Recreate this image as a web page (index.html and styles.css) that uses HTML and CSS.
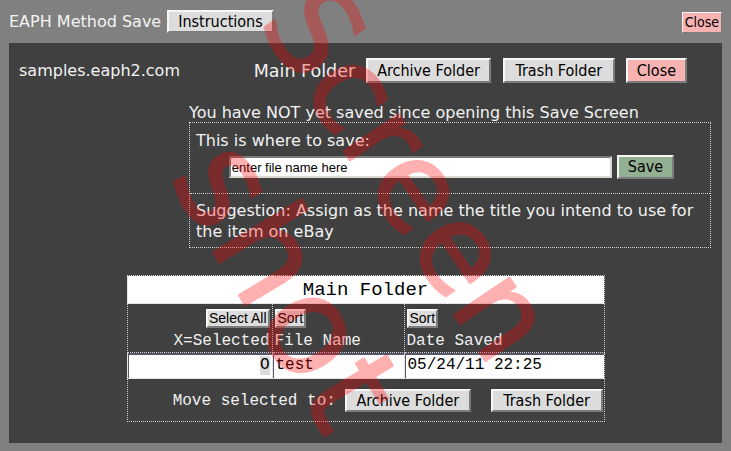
FILE: index.html
```html
<!DOCTYPE html>
<html>
<head>
<meta charset="utf-8">
<title>EAPH Method Save</title>
<link rel="stylesheet" href="styles.css">
</head>
<body>
<div class="topbar">
  <span class="app-title">EAPH Method Save</span>
  <button class="btn btn-instr">Instructions</button>
  <button class="btn btn-pink btn-close-top">Close</button>
</div>
<div class="panel">
  <div class="head-row">
    <span class="site">samples.eaph2.com</span>
    <span class="folder-title">Main Folder</span>
    <button class="btn btn-lg btn-archive">Archive Folder</button>
    <button class="btn btn-lg btn-trash">Trash Folder</button>
    <button class="btn btn-lg btn-pink btn-close">Close</button>
  </div>
  <div class="save-area">
    <div class="status">You have NOT yet saved since opening this Save Screen</div>
    <div class="save-box">
      <div class="save-section">
        <div class="save-label">This is where to save:</div>
        <div class="save-line">
          <input class="name-input" type="text" value="enter file name here">
          <button class="btn btn-save">Save</button>
        </div>
      </div>
      <div class="suggest">Suggestion: Assign as the name the title you intend to use for the item on eBay</div>
    </div>
  </div>
  <table class="files">
    <colgroup><col class="col-sel"><col class="col-name"><col class="col-date"></colgroup>
    <tr><th colspan="3" class="files-title">Main Folder</th></tr>
    <tr class="files-head">
      <td class="c-sel"><div class="hcell hcell-right"><button class="btn-sm">Select All</button><span>X=Selected</span></div></td>
      <td><div class="hcell"><button class="btn-sm">Sort</button><span>File Name</span></div></td>
      <td><div class="hcell"><button class="btn-sm">Sort</button><span>Date Saved</span></div></td>
    </tr>
    <tr class="files-row">
      <td class="c-sel"><span class="mark">O</span></td>
      <td>test</td>
      <td>05/24/11 22:25</td>
    </tr>
    <tr class="files-foot">
      <td colspan="3"><div class="foot-inner"><span>Move selected to:</span><button class="btn btn-foot-archive">Archive Folder</button><button class="btn btn-foot-trash">Trash Folder</button></div></td>
    </tr>
  </table>
</div>
<svg class="watermark" width="731" height="451" viewBox="0 0 731 451" aria-hidden="true">
  <g class="wm-text">
    <text x="374" y="196" transform="rotate(56 374 196)" text-anchor="middle">Screen</text>
    <text class="wm-line2" x="248" y="310" transform="rotate(59 248 310)" text-anchor="middle">shot</text>
  </g>
</svg>
</body>
</html>
```
FILE: styles.css
```css
* { box-sizing: border-box; }
html, body { margin: 0; padding: 0; }
body {
  width: 731px;
  height: 451px;
  overflow: hidden;
  position: relative;
  background: #808080;
  font-family: "DejaVu Sans", Verdana, sans-serif;
  font-size: 16px;
  color: #f2f2f2;
}

.btn {
  font-family: "DejaVu Sans Condensed", "DejaVu Sans", sans-serif;
  font-size: 16px;
  line-height: 19px;
  color: #000;
  background: #dcdcdc;
  border: 2px solid;
  border-color: #f6f6f6 #7c7c7c #7c7c7c #f6f6f6;
  padding: 0 10px;
  margin: 0;
}
.btn-pink { background: #f7b2b2; }

/* top bar */
.topbar {
  display: flex;
  align-items: baseline;
  height: 43px;
  padding: 10px 9px 0 9px;
}
.app-title { line-height: 19px; color: #f4f4f4; }
.btn-instr { margin-left: 6px; padding: 0 9px; }
.btn-close-top {
  margin-left: auto;
  font-size: 14px;
  line-height: 17px;
  padding: 1px 2px;
  border-width: 1px;
}

/* panel */
.panel {
  margin: 0 9px;
  height: 400px;
  background: #404040;
  padding-top: 15px;
}
.head-row {
  display: flex;
  align-items: center;
  height: 25px;
  padding: 0 35px 0 10px;
}
.site { margin-right: auto; }
.folder-title { font-size: 17.5px; margin-right: 11px; }
.btn-lg { padding: 1px 10.5px; }
.btn-archive { margin-right: 12px; padding: 1px 9px; }
.btn-trash { margin-right: 11px; }
.btn-close { padding: 1px 9px; }

.save-area { margin: 20px 11px 0 180px; }
.status { line-height: 19px; white-space: nowrap; }
.save-box { border: 1px dotted #d4d4d4; }
.save-section { padding: 8px 6px 14px; line-height: 19px; }
.save-line {
  display: flex;
  justify-content: center;
  align-items: center;
  gap: 5px;
  margin-top: 5px;
  padding-left: 3px;
}
.name-input {
  width: 383px;
  height: 22px;
  margin: 0;
  padding: 0 1px;
  border: 2px solid;
  border-color: #7a7a7a #dedad2 #dedad2 #7a7a7a;
  background: #fff;
  color: #000;
  font-family: "Liberation Sans", Arial, sans-serif;
  font-size: 13px;
}
.btn-save { background: #93b093; line-height: 20px; padding: 0 9px; }
.suggest {
  border-top: 1px dotted #d4d4d4;
  padding: 6px 0 5px 6px;
  line-height: 21px;
}

/* file table */
.files {
  margin: 27px auto 0;
  width: 477px;
  table-layout: fixed;
  border-collapse: collapse;
  border: 1px dotted #cfcfcf;
  font-family: "Liberation Mono", "Courier New", monospace;
  font-size: 16px;
  color: #f0f0f0;
}
.col-sel { width: 145px; }
.col-name { width: 132px; }
.col-date { width: 200px; }
.files td, .files th {
  border: 1px dotted #cfcfcf;
  padding: 0;
}
.files-title {
  background: #fff;
  color: #000;
  font-weight: normal;
  font-size: 19px;
  line-height: 22px;
  padding: 3px 0 2px !important;
  text-align: center;
}
.files-head td { vertical-align: top; padding: 5px 2px 2px 2px; }
.c-sel { text-align: right; }
.hcell {
  display: flex;
  flex-direction: column;
  align-items: flex-start;
  gap: 4px;
  line-height: 18px;
  white-space: nowrap;
}
.hcell-right { align-items: flex-end; }
.btn-sm {
  font-family: "Liberation Sans", Arial, sans-serif;
  font-size: 14px;
  line-height: 15px;
  color: #000;
  background: #dcdcdc;
  border: 2px solid;
  border-color: #f6f6f6 #7c7c7c #7c7c7c #f6f6f6;
  padding: 0 1px;
  margin: 0;
}
.files-row td {
  background: #fff;
  color: #000;
  line-height: 19px;
  padding: 3px 2px 3px 3px;
  box-shadow: inset 1px 2px 0 #56566a;
}
.mark { display: inline-block; background: #dcdcdc; }
.files-foot td { padding: 10px 1px 9px; }
.foot-inner {
  display: flex;
  justify-content: flex-end;
  align-items: center;
  white-space: nowrap;
}
.btn-foot-archive { margin-left: 9px; padding: 0 9.5px; }
.btn-foot-trash { margin-left: 20px; padding: 0 10.5px; }

/* watermark overlay */
.watermark {
  position: absolute;
  left: 0;
  top: 0;
  pointer-events: none;
}
.wm-text {
  font-family: "DejaVu Sans", sans-serif;
  font-size: 122px;
  fill: #ff0000;
  stroke: #ff0000;
  stroke-width: 2px;
  stroke-linejoin: round;
  opacity: 0.3;
}
.wm-line2 { font-size: 136px; letter-spacing: 4px; }
```
